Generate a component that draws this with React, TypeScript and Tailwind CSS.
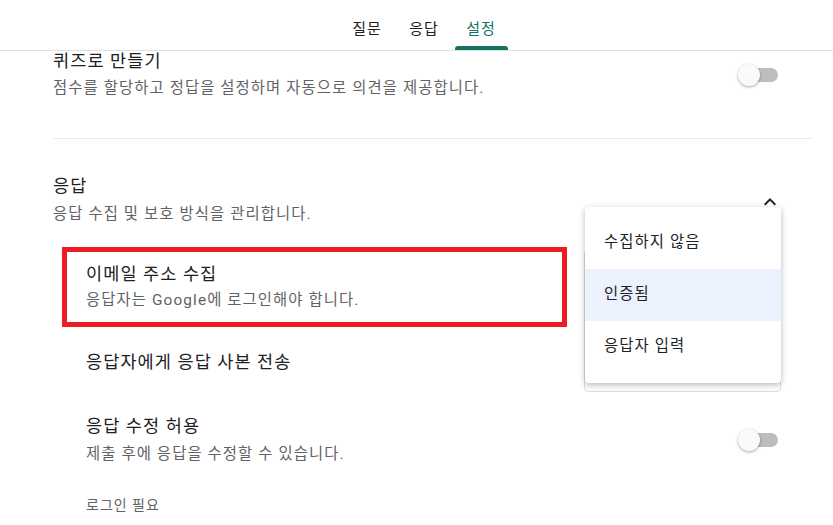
const font = "font-['Roboto','Noto_Sans_CJK_KR',sans-serif]";
const title = 'text-[17.5px] leading-[20px] tracking-[1.1px] text-[#202124]';
const desc = 'text-[15.4px] leading-[20px] tracking-[1.1px] text-[#5f6368]';

function Toggle() {
  return (
    <div className="relative w-[40px] h-[22px] shrink-0">
      <div className="absolute right-0 top-[4px] h-[14px] w-[34px] rounded-full bg-[#bdbdbd]" />
      <div className="absolute left-0 top-0 h-[22px] w-[22px] rounded-full bg-[#fafafa] shadow-[0_1px_3px_rgba(0,0,0,0.35)]" />
    </div>
  );
}

const tabs = ['질문', '응답', '설정'];

export default function App() {
  return (
    <div className={`relative w-[833px] h-[525px] overflow-hidden bg-white ${font}`}>
      <header className="h-[51px] border-b border-[#e0e0e0] flex justify-center items-end pl-[15px] gap-[4px]">
        {tabs.map((t) => {
          const active = t === '설정';
          return (
            <div key={t} className="flex flex-col items-center w-[53px]">
              <span
                className={`text-[15px] leading-[20px] tracking-[1px] mb-[7px] ${
                  active ? 'text-[#137261]' : 'text-[#202124]'
                }`}
              >
                {t}
              </span>
              <div className={`h-[4px] w-full rounded-t-[3px] ${active ? 'bg-[#137261]' : 'bg-transparent'}`} />
            </div>
          );
        })}
      </header>

      <main className="pl-[53px] pr-[21px]">
        {/* 퀴즈 */}
        <div className="flex items-center justify-between pr-[34px]">
          <div>
            <div className={title}>퀴즈로 만들기</div>
            <div className={`mt-[7px] ${desc}`}>점수를 할당하고 정답을 설정하며 자동으로 의견을 제공합니다.</div>
          </div>
          <Toggle />
        </div>

        <div className="mt-[40px] h-px bg-[#ebebeb]" />

        {/* 응답 */}
        <div className="mt-[37px] flex items-center justify-between pr-[30px]">
          <div>
            <div className={title}>응답</div>
            <div className={`mt-[8px] ${desc}`}>응답 수집 및 보호 방식을 관리합니다.</div>
          </div>
          <svg width="24" height="24" viewBox="0 0 24 24" className="mt-[3px]">
            <path d="M7.41 15.41L12 10.83l4.59 4.58L18 14l-6-6-6 6z" fill="#202124" />
          </svg>
        </div>

        <div className="mt-[23px] ml-[9px] w-[505px] border-[5px] border-[#ed1c24] pl-[19px] py-[12px]">
          <div className={title}>이메일 주소 수집</div>
          <div className={`mt-[6px] ${desc}`}>응답자는 Google에 로그인해야 합니다.</div>
        </div>

        <div className={`mt-[25px] pl-[33px] ${title}`}>응답자에게 응답 사본 전송</div>

        <div className="mt-[44px] pl-[33px] flex items-center justify-between pr-[34px]">
          <div>
            <div className={title}>응답 수정 허용</div>
            <div className={`mt-[8px] ${desc}`}>제출 후에 응답을 수정할 수 있습니다.</div>
          </div>
          <Toggle />
        </div>

        <div className="mt-[31px] pl-[33px] text-[14px] leading-[20px] tracking-[1px] text-[#5f6368]">
          로그인 필요
        </div>
      </main>

      {/* select box under the open menu */}
      <div className="absolute left-[584px] top-[250px] w-[197px] h-[142px] rounded-[4px] border border-[#dadce0]" />

      {/* open dropdown menu */}
      <div className="absolute left-[585px] top-[207px] w-[196px] rounded-[4px] bg-white py-[10px] shadow-[0_2px_6px_rgba(0,0,0,0.28)]">
        {['수집하지 않음', '인증됨', '응답자 입력'].map((o) => (
          <div
            key={o}
            className={`h-[52px] flex items-center pl-[19px] text-[15.4px] tracking-[1.1px] text-[#202124] ${
              o === '인증됨' ? 'bg-[#ebf2fd]' : ''
            }`}
          >
            {o}
          </div>
        ))}
      </div>
    </div>
  );
}
